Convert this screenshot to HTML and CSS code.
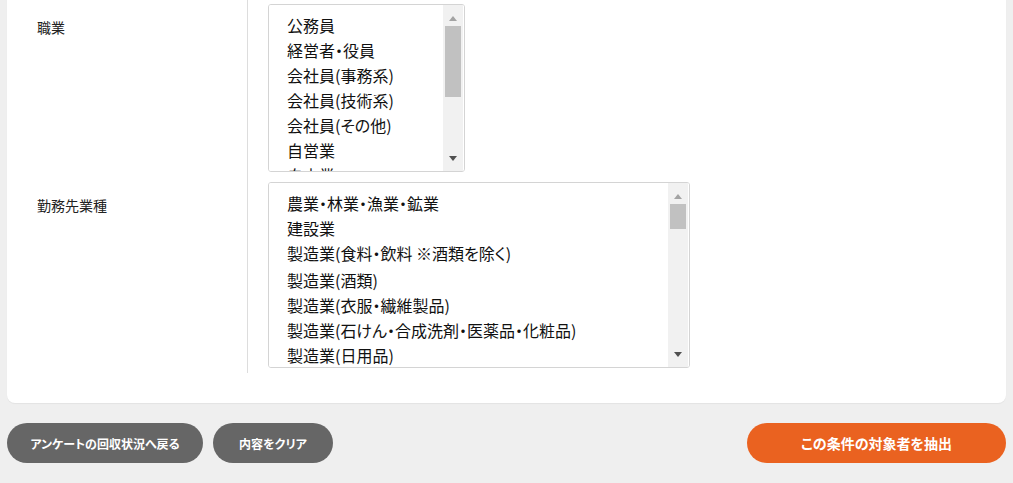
FILE: index.html
```html
<!DOCTYPE html>
<html lang="ja">

<head>
    <meta charset="UTF-8">
    <meta name="viewport" content="width=device-width, initial-scale=1.0">
    <title>対象者の抽出</title>
    <link rel="stylesheet" href="styles.css">
</head>

<body>
    <div class="card">
        <div class="form-row">
            <div class="form-label">職業</div>
            <div class="form-field">
                <div class="select-wrap">
                    <select class="list-select list-job" multiple>
                        <option>公務員</option>
                        <option>経営者・役員</option>
                        <option>会社員(事務系)</option>
                        <option>会社員(技術系)</option>
                        <option>会社員(その他)</option>
                        <option>自営業</option>
                        <option>自由業</option>
                        <option>専業主婦(主夫)</option>
                        <option>パート・アルバイト</option>
                        <option>学生</option>
                        <option>無職</option>
                        <option>その他</option>
                    </select>
                    <div class="scrollbar">
                        <span class="sb-arrow sb-up"></span>
                        <span class="sb-thumb thumb-job"></span>
                        <span class="sb-arrow sb-down"></span>
                    </div>
                </div>
            </div>
        </div>
        <div class="form-row">
            <div class="form-label">勤務先業種</div>
            <div class="form-field">
                <div class="select-wrap">
                    <select class="list-select list-industry" multiple>
                        <option>農業・林業・漁業・鉱業</option>
                        <option>建設業</option>
                        <option class="opt-note">製造業(食料・飲料 ※酒類を除く)</option>
                        <option>製造業(酒類)</option>
                        <option>製造業(衣服・繊維製品)</option>
                        <option>製造業(石けん・合成洗剤・医薬品・化粧品)</option>
                        <option>製造業(日用品)</option>
                        <option>製造業(家具・インテリア)</option>
                        <option>製造業(化学・石油・ゴム製品)</option>
                        <option>製造業(鉄鋼・金属製品)</option>
                        <option>製造業(機械・精密機器)</option>
                        <option>製造業(電気機器)</option>
                        <option>製造業(自動車・輸送用機器)</option>
                        <option>製造業(その他)</option>
                        <option>電気・ガス・熱供給・水道業</option>
                        <option>情報通信業(通信)</option>
                        <option>情報通信業(放送)</option>
                        <option>情報通信業(ソフトウェア・情報処理)</option>
                        <option>情報通信業(インターネット関連)</option>
                        <option>情報通信業(その他)</option>
                        <option>運輸業</option>
                        <option>郵便業</option>
                        <option>卸売業</option>
                        <option>小売業(百貨店・スーパー)</option>
                        <option>小売業(コンビニエンスストア)</option>
                        <option>小売業(ドラッグストア)</option>
                        <option>小売業(その他)</option>
                        <option>金融業(銀行)</option>
                        <option>金融業(証券)</option>
                        <option>金融業(その他)</option>
                        <option>保険業</option>
                        <option>不動産業</option>
                        <option>物品賃貸業</option>
                        <option>学術研究・専門・技術サービス業</option>
                        <option>広告業</option>
                        <option>調査業</option>
                        <option>宿泊業</option>
                        <option>飲食サービス業</option>
                        <option>生活関連サービス業</option>
                        <option>娯楽業</option>
                        <option>教育・学習支援業</option>
                        <option>医療・福祉</option>
                        <option>複合サービス事業</option>
                        <option>その他サービス業</option>
                        <option>公務</option>
                        <option>その他</option>
                    </select>
                    <div class="scrollbar">
                        <span class="sb-arrow sb-up"></span>
                        <span class="sb-thumb thumb-industry"></span>
                        <span class="sb-arrow sb-down"></span>
                    </div>
                </div>
            </div>
        </div>
    </div>

    <div class="actions">
        <button class="btn btn-gray btn-back">アンケートの回収状況へ戻る</button>
        <button class="btn btn-gray btn-clear">内容をクリア</button>
        <button class="btn btn-orange btn-submit">この条件の対象者を抽出</button>
    </div>
</body>

</html>
```

FILE: styles.css
```css
body {
    margin: 0;
    background-color: #efefef;
    font-family: "Noto Sans CJK JP", "Noto Sans", sans-serif;
    color: #111;
}

.card {
    margin: 0 7px;
    padding-bottom: 30px;
    background-color: #fff;
    border-radius: 0 0 8px 8px;
    box-shadow: 0 1px 1px rgba(0, 0, 0, 0.05);
}

.form-row {
    display: flex;
}

.form-row:first-child {
    margin-top: -1px;
}

.form-label {
    width: 210px;
    padding: 18px 0 0 30px;
    border-right: 1px solid #ddd;
    font-size: 14px;
    line-height: 20px;
    color: #222;
}

.form-field {
    padding: 5px 20px;
}

.select-wrap {
    position: relative;
    display: inline-block;
    vertical-align: top;
}

.list-select {
    display: block;
    box-sizing: border-box;
    padding: 8px 0 0 0;
    border: 1px solid #d4d4d4;
    border-radius: 3px;
    background-color: #fff;
    font-family: "Noto Sans CJK JP", "Noto Sans", sans-serif;
    font-size: 16px;
    color: #111;
    outline: none;
}

.list-select option {
    padding: 0 0 0 18px;
    height: 25px;
    line-height: 25px;
    font-feature-settings: "palt";
}

.list-select option.opt-note {
    height: 27px;
    line-height: 27px;
}

.list-job {
    width: 197px;
    height: 168px;
}

.list-industry {
    width: 422px;
    height: 186px;
}

/* fake scrollbar (headless hides the native one) */
.scrollbar {
    position: absolute;
    top: 1px;
    right: 2px;
    bottom: 1px;
    width: 20px;
    background-color: #f1f1f1;
}

.sb-arrow {
    position: absolute;
    left: 6px;
    width: 0;
    height: 0;
    border-left: 4px solid transparent;
    border-right: 4px solid transparent;
}

.sb-up {
    top: 11px;
    border-bottom: 5px solid #a3a3a3;
}

.sb-down {
    bottom: 10px;
    border-top: 5px solid #505050;
}

.sb-thumb {
    position: absolute;
    left: 2px;
    right: 2px;
    background-color: #c1c1c1;
}

.thumb-job {
    top: 21px;
    height: 71px;
}

.thumb-industry {
    top: 21px;
    height: 25px;
}

.actions {
    display: flex;
    gap: 10px;
    padding: 20px 7px;
}

.btn {
    height: 40px;
    border: none;
    border-radius: 20px;
    color: #fff;
    font-family: "Noto Sans CJK JP", "Noto Sans", sans-serif;
    font-size: 12px;
    font-weight: bold;
    font-feature-settings: "palt";
    cursor: pointer;
}

.btn-gray {
    background-color: #666;
}

.btn-back {
    width: 196px;
}

.btn-clear {
    width: 120px;
}

.btn-orange {
    margin-left: auto;
    width: 259px;
    background-color: #ea6220;
    font-size: 14px;
}
```
